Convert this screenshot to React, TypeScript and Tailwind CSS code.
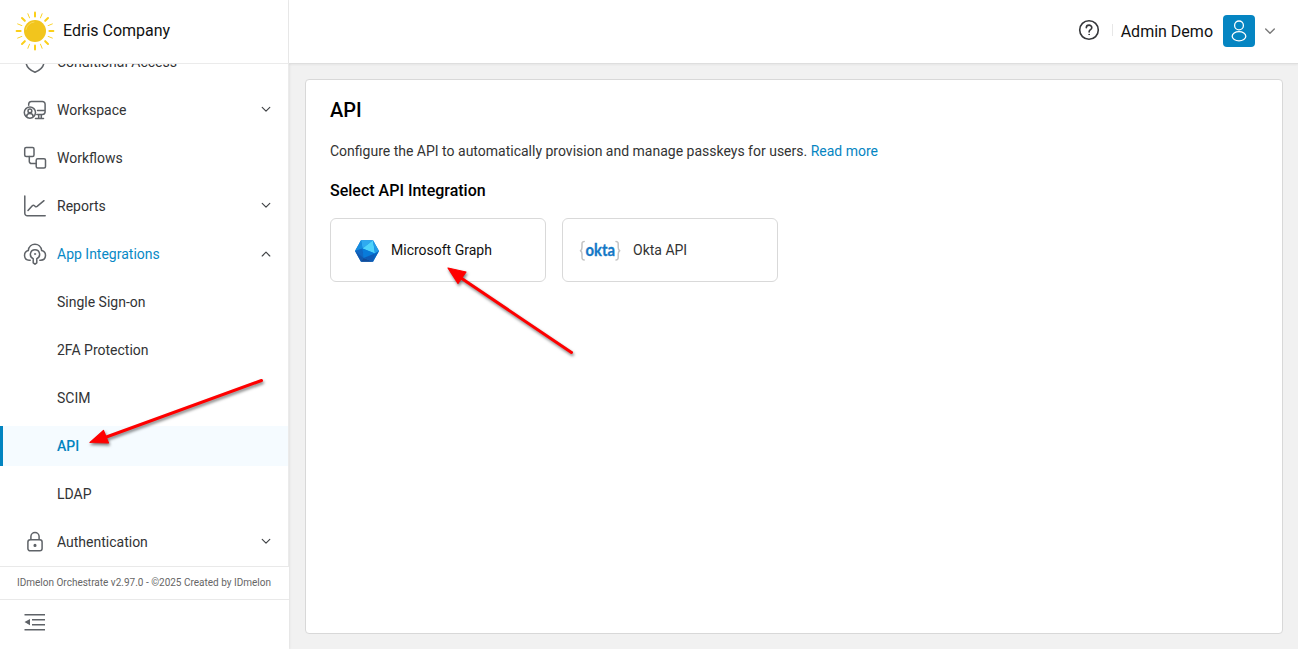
import type { ReactNode } from "react";

function Icon({ children, className = "" }: { children: ReactNode; className?: string }) {
  return (
    <svg
      viewBox="0 0 24 24"
      className={"h-6 w-6 shrink-0 " + className}
      fill="none"
      stroke="#5f6368"
      strokeWidth="1.500"
      strokeLinecap="round"
      strokeLinejoin="round"
    >
      {children}
    </svg>
  );
}

const icons = {
  shield: (
    <Icon>
      <path d="M12 1.500 3 5v6.500c0 5 4 8.800 9 10.800 5-2 9-5.800 9-10.800V5z" />
      <path d="M12 8v5" />
    </Icon>
  ),
  workspace: (
    <Icon>
      <path d="M5.700 7.200V5.800A2.700 2.700 0 0 1 8.400 3.500h11a2.700 2.700 0 0 1 2.700 2.700v8a2.700 2.700 0 0 1-2.700 2.300h-5.600M14.500 12.600h7.300M15.700 17v3.300M18.300 17v3.300M12.500 20.400h8" />
      <circle cx="6.900" cy="14.600" r="5.600" />
      <circle cx="6.900" cy="12.900" r="1.900" />
      <path d="M3.600 18.600c.2-4 6.400-4 6.600 0" />
    </Icon>
  ),
  workflows: (
    <Icon>
      <rect x="1.700" y="1.500" width="9.300" height="9" rx="1.500" />
      <rect x="13.200" y="12.700" width="9.300" height="9.300" rx="1.500" />
      <path d="M6.300 10.600v4.800a2.100 2.100 0 0 0 2.100 2.100h4.800" />
    </Icon>
  ),
  reports: (
    <Icon>
      <path d="M1.800 2v17.300a2.500 2.500 0 0 0 2.500 2.500H22.200" />
      <path d="M5 16.500 9.300 11.700q1.100-1 2.200 0l.6.600q1.200 1 2.300-.1L21 6.700" />
    </Icon>
  ),
  cloud: (
    <Icon>
      <path d="M7.200 18.200H6.500C.4 18.500-.1 10 5.300 8.600 6.200.2 17.600.1 18.700 8.600c5.400 1.400 5 9.500-1 9.600h-.9" />
      <path d="M10.200 16.600C5.600 14.500 7 7.700 12 7.700s6.400 6.800 1.800 8.900v4.200L12 22.200l-1.800-1.400z" />
      <circle cx="12" cy="12" r=".7" fill="#5f6368" strokeWidth=".6" />
    </Icon>
  ),
  lock: (
    <Icon>
      <rect x="4.900" y="9.700" width="14.200" height="11.100" rx="2.300" />
      <path d="M7.900 9.600V6.600a4.100 4.100 0 0 1 8.200 0v3" />
      <circle cx="12" cy="15.400" r=".8" fill="#5f6368" />
    </Icon>
  ),
};

function Chevron({ up = false }: { up?: boolean }) {
  return (
    <svg
      viewBox="0 0 12 12"
      className="mr-4 ml-auto h-3 w-3 shrink-0 -translate-y-px"
      fill="none"
      stroke="#404346"
      strokeWidth="1.150"
      strokeLinecap="round"
      strokeLinejoin="round"
    >
      <path d={up ? "M2.200 9 6 5.200 9.800 9" : "M2.200 4.300 6 8.100l3.800-3.800"} />
    </svg>
  );
}

type Item = { label: string; icon?: ReactNode; chevron?: "up" | "down"; highlighted?: boolean; active?: boolean };

const items: Item[] = [
  { label: "Conditional Access", icon: icons.shield },
  { label: "Workspace", icon: icons.workspace, chevron: "down" },
  { label: "Workflows", icon: icons.workflows },
  { label: "Reports", icon: icons.reports, chevron: "down" },
  { label: "App Integrations", icon: icons.cloud, chevron: "up", highlighted: true },
  { label: "Single Sign-on" },
  { label: "2FA Protection" },
  { label: "SCIM" },
  { label: "API", active: true },
  { label: "LDAP" },
  { label: "Authentication", icon: icons.lock, chevron: "down" },
];

function MenuRow({ item }: { item: Item }) {
  return (
    <li
      className={
        "flex h-10 shrink-0 items-center border-l-[3px] pl-5 text-sm " +
        (item.active
          ? "border-[#0284c0] bg-[#f5fbff] font-medium text-[#0284c0]"
          : item.highlighted
            ? "border-transparent text-[#0889c6]"
            : "border-transparent text-[#323335]")
      }
    >
      {item.icon ?? <span className="w-6 shrink-0" />}
      <span className="ml-2.5">{item.label}</span>
      {item.chevron && <Chevron up={item.chevron === "up"} />}
    </li>
  );
}

const rays = Array.from({ length: 16 }, (_, i) => i * 22.5);

function Sun() {
  return (
    <svg viewBox="-20 -20 40 40" className="-mt-0.5 h-10 w-10">
      {rays.map((angle, i) => (
        <line
          key={angle}
          y1={i % 2 ? -14.2 : -14.4}
          y2={i % 2 ? -18.8 : -18.4}
          stroke="#fbcf18"
          strokeWidth={i % 2 ? 0.9 : 2}
          strokeLinecap="round"
          transform={`rotate(${angle})`}
        />
      ))}
      <circle r="11" fill="#f2c51d" />
      <path d="M-9-1.500A9 9 0 0 1-1-9" fill="none" stroke="#f8dd68" strokeWidth=".8" strokeLinecap="round" />
    </svg>
  );
}

function GraphLogo() {
  return (
    <svg viewBox="0 0 24 22" className="mt-0.5 h-[22px] w-6 shrink-0">
      <path d="M6 .2h12L24 11l-6 10.800H6L0 11z" fill="#0a75d1" />
      <path d="M6 .2h12L7.500 8.500z" fill="#2faaf0" />
      <path d="M18 .2 20 13.500 7.500 8.500z" fill="#4fd3fb" />
      <path d="M18 .2 24 11l-4 2.500z" fill="#229ce8" />
      <path d="M6 .2 0 11l7.500-2.500z" fill="#168cdf" />
      <path d="M0 11 7.500 8.500 8.700 18z" fill="#1068c4" />
      <path d="M7.500 8.500 20 13.500 8.700 18z" fill="#087bda" />
      <path d="M0 11l8.700 7L6 21.800z" fill="#1258ae" />
      <path d="m8.700 18 9.300 3.800H6z" fill="#124b99" />
      <path d="m20 13.500-2 8.300L8.700 18z" fill="#0f5bb6" />
      <path d="m24 11-6 10.800 2-8.300z" fill="#0964bf" />
    </svg>
  );
}

function OktaLogo() {
  return (
    <svg viewBox="0 0 42 22" className="mt-0.5 h-[22px] w-[42px] shrink-0" fill="none" strokeLinecap="round" strokeLinejoin="round">
      <g stroke="#c2c2c2" strokeWidth="1.500">
        <path d="M5.200 1.500C2.600 1.500 3 3.300 3 7.200c0 2-.4 3-1.500 3.500C2.600 11.200 3 12.200 3 14.200c0 3.900-.4 5.700 2.200 5.700" />
        <path d="M37 1.500c2.600 0 2.200 1.800 2.200 5.700 0 2 .4 3 1.500 3.500-1.100.5-1.500 1.500-1.500 3.500 0 3.900.4 5.700-2.200 5.700" />
      </g>
      <text
        x="6.500"
        y="15.600"
        textLength="29.500"
        lengthAdjust="spacingAndGlyphs"
        fill="#1478c6"
        stroke="#1478c6"
        strokeWidth=".35"
        className="font-[Lato,sans-serif] text-[17.500px] font-bold"
      >
        okta
      </text>
    </svg>
  );
}

function Arrows() {
  return (
    <svg
      viewBox="0 0 1298 649"
      className="pointer-events-none absolute inset-0 h-full w-full drop-shadow-[1.500px_2px_1.500px_rgba(0,0,0,0.5)]"
      fill="#fe0000"
      stroke="#fe0000"
      strokeLinecap="round"
      strokeLinejoin="round"
    >
      <path d="M261.500 380.500 105 437.500M571.500 352.500 461 278" strokeWidth="3" />
      <path d="m90 442.500 13.500-12 5 12.500zM448 268l18 4-8 11.500z" strokeWidth="1.200" />
    </svg>
  );
}

export default function App() {
  return (
    <div className="relative flex h-[649px] w-[1298px] overflow-hidden bg-[#f1f1f1] font-[Roboto,sans-serif]">
      <aside className="flex w-[289px] shrink-0 flex-col bg-white shadow-[1px_0_2px_rgba(0,0,0,0.06)]">
        <div className="flex h-16 shrink-0 items-center gap-2 border-r border-b border-[#ebebeb] pl-[15px] text-base text-[#111]">
          <Sun />
          <span className="-mt-0.5">Edris Company</span>
        </div>
        <nav className="min-h-0 flex-1 overflow-hidden border-r border-[#ebebeb]">
          <ul className="-mt-[22px] flex flex-col gap-2">
            {items.map((item) => (
              <MenuRow key={item.label} item={item} />
            ))}
          </ul>
        </nav>
        <div className="flex h-[33px] shrink-0 items-center border-t border-[#e9e9e9] pb-0.5 pl-[17px] text-[10px] whitespace-nowrap text-[#666]">
          IDmelon Orchestrate v2.97.0 - ©2025 Created by IDmelon
        </div>
        <div className="flex h-[50px] shrink-0 items-center border-t border-[#e9e9e9] pb-1.5 pl-[23px]">
          <svg viewBox="0 0 24 24" className="h-6 w-6" fill="#5f6368">
            <path d="M1.500 4h20.500v1.500H1.500zM9 9h13v1.500H9zM9 14h13v1.500H9zM1.500 19h20.500v1.500H1.500zM1.500 12.100 7 8.900v6.400z" />
          </svg>
        </div>
      </aside>

      <div className="flex min-w-0 flex-1 flex-col">
        <header className="flex h-16 shrink-0 items-center justify-end border-b border-[#dedede] bg-white pr-[22px] shadow-[0_1px_2px_rgba(0,0,0,0.05)]">
          <svg viewBox="0 0 24 24" className="mb-1 h-6 w-6" fill="none" stroke="#35373a" strokeWidth="1.600" strokeLinecap="round">
            <circle cx="12" cy="12" r="9.300" />
            <path d="M9.300 9.800c0-3.600 5.500-3.500 5.500-.1 0 2-2.700 2-2.700 4.200" />
            <circle cx="12.100" cy="16.400" r=".35" fill="#35373a" strokeWidth="1" />
          </svg>
          <div className="mb-1 ml-[11px] h-3 w-px bg-[#e7e7e7]" />
          <span className="ml-2 text-base text-[#111]">Admin Demo</span>
          <div className="mb-0.5 ml-2.5 flex h-8 w-8 items-center justify-center rounded bg-[#0585c2]">
            <svg viewBox="0 0 20 24" className="h-6 w-5" fill="none" stroke="white" strokeWidth="1.300">
              <circle cx="10" cy="6.400" r="4.400" />
              <ellipse cx="10" cy="17.300" rx="6.800" ry="4.600" />
            </svg>
          </div>
          <svg viewBox="0 0 12 12" className="mb-0.5 ml-[9px] h-3 w-3" fill="none" stroke="#7a7a7a" strokeWidth="1.400" strokeLinecap="round" strokeLinejoin="round">
            <path d="M1.700 4 6 8.300 10.300 4" />
          </svg>
        </header>

        <main className="min-h-0 flex-1 pt-[15px] pr-[15px] pb-[15px] pl-4">
          <section className="h-full rounded border border-[#d8d8d8] bg-white px-6 pt-4">
            <h1 className="text-xl leading-7 font-medium text-black">API</h1>
            <p className="mt-[17px] text-sm leading-5 text-[#333]">
              Configure the API to automatically provision and manage passkeys for users.{" "}
              <a className="text-[#0585c2]">Read more</a>
            </p>
            <h2 className="mt-[18px] text-base leading-6 font-medium text-black">Select API Integration</h2>
            <div className="mt-[15px] flex gap-4">
              <div className="flex h-16 w-[216px] items-center rounded-md border border-[#d9d9d9] pl-6">
                <GraphLogo />
                <span className="ml-3 text-sm text-[#111]">Microsoft Graph</span>
              </div>
              <div className="flex h-16 w-[216px] items-center rounded-md border border-[#d9d9d9] pl-4">
                <OktaLogo />
                <span className="ml-3 text-sm text-[#333]">Okta API</span>
              </div>
            </div>
          </section>
        </main>
      </div>
      <Arrows />
    </div>
  );
}
